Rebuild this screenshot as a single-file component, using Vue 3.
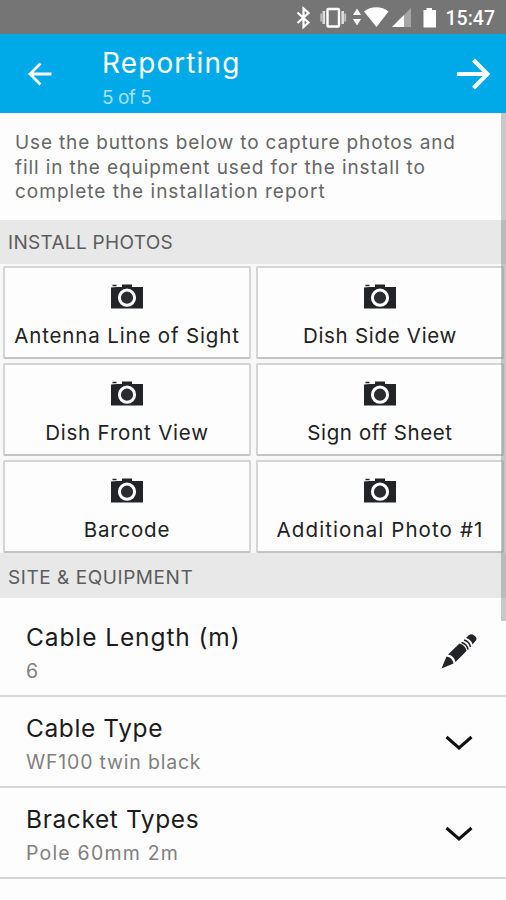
<script setup>
import { ref } from 'vue';

const photos = ref([
    { name: 'Antenna Line of Sight', cls: 'antenna' },
    { name: 'Dish Side View', cls: 'side' },
    { name: 'Dish Front View', cls: 'front' },
    { name: 'Sign off Sheet', cls: 'sheet' },
    { name: 'Barcode', cls: 'barcode' },
    { name: 'Additional Photo #1', cls: 'additional' },
]);

const fields = ref([
    { name: 'Cable Length (m)', value: '6', type: 'text', cls: 'length' },
    { name: 'Cable Type', value: 'WF100 twin black', type: 'select', cls: 'cable' },
    { name: 'Bracket Types', value: 'Pole 60mm 2m', type: 'select', cls: 'bracket' },
]);
</script>

<template>
    <div class="screen">
        <!-- Status bar -->
        <div class="status">
            <svg class="status__icons" width="150" height="34" viewBox="0 0 150 34">
                <path d="M6.5 12.5l11 10-5 4.500V8.500l5 4.500-11 10" fill="none" stroke="#fff" stroke-width="2.200" />
                <rect x="36.500" y="9" width="11.500" height="17.500" rx="1" fill="none" stroke="#fff" stroke-width="2.400" />
                <path d="M32.800 11v13M51.700 11v13" stroke="#dcdcdc" stroke-width="2.600" />
                <path d="M30.300 13.500v8M54.200 13.500v8" stroke="#bcbcbc" stroke-width="2" />
                <path d="M66 8.500l4 6.500h-8zM66 25.500l4-6.500h-8z" fill="#fff" />
                <path d="M73 11.500C79.500 5.800 91 5.800 97.500 11.500L85.500 27z" fill="#fff" />
                <path d="M120 8v19h-19z" fill="#a6a6a6" />
                <path d="M113 15v12h-12z" fill="#fff" />
                <path d="M135.500 8h5.500v2h4v17.500h-12.500V10h3z" fill="#fff" />
            </svg>
            <span class="status__time">15:47</span>
        </div>

        <!-- Header -->
        <header class="header">
            <svg class="header__back" width="24" height="24" viewBox="0 0 24 24">
                <path d="M23.500 12H2M12.500 1.500L2 12l10.500 10.500" />
            </svg>
            <div class="header__text">
                <h1>Reporting</h1>
                <p>5 of 5</p>
            </div>
            <svg class="header__next" width="34" height="32" viewBox="0 0 34 32">
                <path d="M1 16h30M17.500 2l14 14-14 14" />
            </svg>
        </header>

        <main class="content">
            <p class="intro">
                <span class="l1">Use the buttons below to capture photos and</span><br />
                <span class="l2">fill in the equipment used for the install to</span><br />
                <span class="l3">complete the installation report</span>
            </p>

            <h2 class="section section--photos">INSTALL PHOTOS</h2>
            <div class="photos">
                <button v-for="photo in photos" :key="photo.name" class="photo">
                    <svg width="32" height="25" viewBox="0 0 32 25">
                        <path d="M0 3.500L6 3 11 3V0.500h10V3h11v21.500H0z" fill="#222428" />
                        <path d="M1.500 1.500h4" stroke="#222428" stroke-width="1.500" />
                        <circle cx="16" cy="13.700" r="7.600" fill="#2a2c30" stroke="#fff" stroke-width="3" />
                    </svg>
                    <span :class="photo.cls">{{ photo.name }}</span>
                </button>
            </div>

            <h2 class="section section--site">SITE &amp; EQUIPMENT</h2>
            <div v-for="field in fields" :key="field.name" class="field" :class="'field--' + field.cls">
                <div class="field__text">
                    <h3>{{ field.name }}</h3>
                    <p>{{ field.value }}</p>
                </div>
                <svg v-if="field.type === 'text'" class="pencil" width="36" height="36" viewBox="0 0 36 36">
                    <path d="M0.500 35.500L5.500 23.500Q11 24 12.500 30.500Z" />
                    <path d="M7 21.500L18.500 10.500Q24.500 12 25.500 18L14.500 29Q13 22.500 7 21.500Z" />
                    <path d="M20.500 9.500Q26 11 27 16.500M23 7Q28.500 8.500 29.500 14" class="pencil__band" />
                    <path d="M25 5L28 2Q31 0 34 3T34 8.500L31.500 11.500Q30.500 6.500 25 5Z" />
                </svg>
                <svg v-else class="chevron" width="28" height="16" viewBox="0 0 28 16">
                    <path d="M1.500 3L14 14 26.500 3" />
                </svg>
            </div>
            <div class="field field--fixings">
                <div class="field__text">
                    <h3>Fixings</h3>
                </div>
            </div>
            <div class="scrollbar"></div>
        </main>
    </div>
</template>

<style>
body {
    margin: 0;
    background: #fdfdfd;
}
</style>

<style scoped>
* {
    box-sizing: border-box;
    margin: 0;
    padding: 0;
}

.screen {
    width: 506px;
    height: 900px;
    overflow: hidden;
    display: flex;
    flex-direction: column;
    background: #fdfdfd;
    font-family: Inter, "Open Sans", sans-serif;
}

.status {
    flex: 0 0 34px;
    display: flex;
    align-items: center;
    justify-content: flex-end;
    padding-right: 11px;
    background: #757575;
}

.status__icons {
    margin-right: 5px;
}

.status__time {
    font-family: Roboto, sans-serif;
    font-weight: 500;
    font-size: 19.5px;
    line-height: 31px;
    padding-top: 3px;
    color: #fff;
}

.header {
    flex: 0 0 79px;
    display: flex;
    align-items: center;
    padding: 0 16px 0 28px;
    background: #00aae9;
    color: #fff;
}

.header path {
    fill: none;
    stroke: #fff;
    stroke-width: 2.8;
}

.header .header__next path {
    stroke-width: 4;
}

.header__text {
    flex: 1;
    margin-left: 50px;
}

h1 {
    font-weight: 400;
    font-size: 28px;
    line-height: 36px;
    letter-spacing: 1.1px;
    padding-top: 9px;
}

.header p {
    font-size: 19px;
    line-height: 28px;
    letter-spacing: -0.5px;
    color: #a9e1f8;
    padding-top: 3px;
}

.content {
    flex: 1;
    position: relative;
}

.intro {
    height: 107px;
    padding: 18px 0 0 15px;
    font-size: 19px;
    line-height: 24.5px;
    white-space: nowrap;
    color: #666;
}

.l1 {
    letter-spacing: 0.86px;
}

.l2 {
    letter-spacing: 0.9px;
}

.l3 {
    letter-spacing: 1px;
}

.section {
    height: 44px;
    padding-left: 8px;
    background: #e8e8e8;
    font-weight: 400;
    font-size: 19px;
    line-height: 46px;
    letter-spacing: 0.3px;
    color: #5c5c5c;
}

.section--site {
    height: 45px;
    line-height: 50px;
    letter-spacing: 0.55px;
}

.photos {
    display: grid;
    grid-template-columns: 248px 248px;
    grid-auto-rows: 93px;
    gap: 4px 5px;
    padding: 2px 0 0 3px;
    background: #f8f8f8;
}

.photo {
    display: flex;
    flex-direction: column;
    align-items: center;
    padding-top: 16px;
    border: 2px solid #d5d5d5;
    border-bottom-color: #c3c3c3;
    border-radius: 2px;
    background: #fdfdfd;
    font-family: inherit;
    font-size: 20.5px;
    line-height: 28px;
    white-space: nowrap;
    color: #222;
}

.photo span {
    margin-top: 13px;
}

.antenna {
    letter-spacing: 0.85px;
}

.side {
    letter-spacing: 0.7px;
}

.front,
.barcode {
    letter-spacing: 0.8px;
}

.sheet {
    letter-spacing: 0.6px;
}

.additional {
    letter-spacing: 1.1px;
}

.field {
    height: 91px;
    display: flex;
    justify-content: space-between;
    align-items: center;
    padding: 0 33px 0 26px;
    border-bottom: 2px solid #d6d6d6;
}

.field__text {
    padding-top: 7px;
}

h3 {
    font-weight: 400;
    font-size: 24.5px;
    line-height: 33px;
    letter-spacing: 0.6px;
    color: #1c1c1c;
}

.field p {
    font-size: 19.5px;
    line-height: 34px;
    letter-spacing: 0.8px;
    color: #808080;
}

.field--length {
    height: 99px;
    padding-top: 8px;
}

.field--length h3 {
    letter-spacing: 0.9px;
}

.field--bracket p {
    letter-spacing: 1.2px;
}

.field--fixings {
    align-items: flex-start;
    padding-top: 8px;
    border: none;
}

.field--fixings h3 {
    letter-spacing: 2px;
    color: #777;
}

.pencil {
    margin-right: -4px;
    fill: #222428;
}

.pencil__band {
    fill: none;
    stroke: #222428;
    stroke-width: 1.6;
}

.chevron path {
    fill: none;
    stroke: #111;
    stroke-width: 3;
}

.scrollbar {
    position: absolute;
    top: 0;
    right: 0;
    width: 5px;
    height: 508px;
    background: rgba(120, 120, 120, 0.4);
}
</style>
